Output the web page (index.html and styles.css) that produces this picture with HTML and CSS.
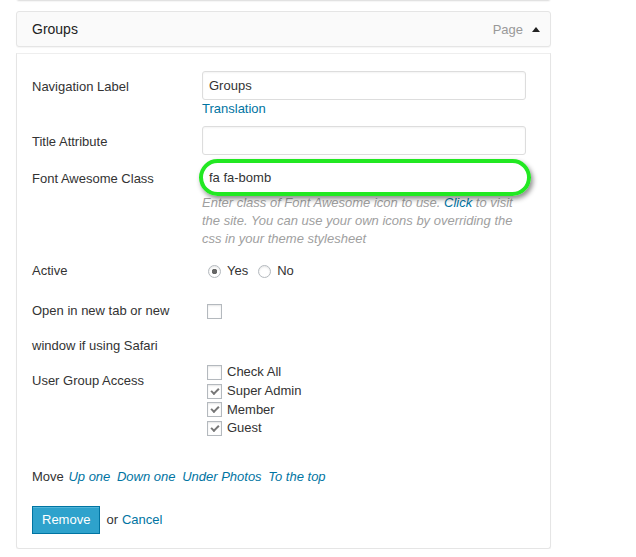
FILE: index.html
```html
<!DOCTYPE html>
<html lang="en">
<head>
  <meta charset="UTF-8">
  <meta name="viewport" content="width=device-width, initial-scale=1.0">
  <title>Menu Item - Groups</title>
  <link rel="stylesheet" href="styles.css">
</head>
<body>
  <div class="menu">
    <div class="item-prev"></div>

    <div class="item-bar">
      <span class="item-title">Groups</span>
      <span class="item-controls">
        <span class="item-type">Page</span>
        <span class="item-toggle"></span>
      </span>
    </div>

    <form class="item-settings">
      <div class="field">
        <label class="field-label" for="nav-label">Navigation Label</label>
        <div class="field-body">
          <input type="text" id="nav-label" value="Groups">
          <a href="#" class="translation">Translation</a>
        </div>
      </div>

      <div class="field">
        <label class="field-label" for="title-attr">Title Attribute</label>
        <div class="field-body">
          <input type="text" id="title-attr">
        </div>
      </div>

      <div class="field">
        <label class="field-label" for="fa-class">Font Awesome Class</label>
        <div class="field-body">
          <div class="fa-input">
            <input type="text" id="fa-class" value="fa fa-bomb">
            <span class="ring"></span>
          </div>
          <p class="help">Enter class of Font Awesome icon to use. <a href="#">Click</a> to visit the site. You can use your own icons by overriding the css in your theme stylesheet</p>
        </div>
      </div>

      <div class="field field-active">
        <span class="field-label">Active</span>
        <div class="field-body">
          <label class="radio"><input type="radio" name="active" checked> Yes</label>
          <label class="radio"><input type="radio" name="active"> No</label>
        </div>
      </div>

      <div class="field field-newtab">
        <label class="field-label" for="new-tab">Open in new tab or new window if using Safari</label>
        <div class="field-body">
          <input type="checkbox" id="new-tab">
        </div>
      </div>

      <div class="field field-access">
        <span class="field-label">User Group Access</span>
        <div class="field-body">
          <label class="check"><input type="checkbox"> Check All</label>
          <label class="check"><input type="checkbox" checked> Super Admin</label>
          <label class="check"><input type="checkbox" checked> Member</label>
          <label class="check"><input type="checkbox" checked> Guest</label>
        </div>
      </div>

      <div class="move">
        Move
        <a href="#">Up one</a>
        <a href="#">Down one</a>
        <a href="#">Under Photos</a>
        <a href="#">To the top</a>
      </div>

      <div class="actions">
        <button type="button" class="button-primary">Remove</button>
        <span class="or">or</span>
        <a href="#" class="cancel">Cancel</a>
      </div>
    </form>
  </div>
</body>
</html>
```

FILE: styles.css
```css
body {
  margin: 0;
  font-family: "Liberation Sans", Arial, sans-serif;
  font-size: 13px;
  color: #333;
  background-color: #fff;
}
a {
  color: #0074a2;
  text-decoration: none;
}
.menu {
  width: 535px;
  margin-left: 16px;
}
.item-prev {
  height: 9px;
  margin-top: -10px;
  border: 1px solid #e2e2e2;
  border-radius: 0 0 3px 3px;
  box-shadow: 0 1px 1px rgba(0, 0, 0, 0.04);
}
.item-bar {
  height: 36px;
  box-sizing: border-box;
  margin-top: 10px;
  padding: 0 10px 0 15px;
  display: flex;
  align-items: center;
  justify-content: space-between;
  background-color: #fafafa;
  border: 1px solid #e5e5e5;
  border-radius: 3px;
  box-shadow: 0 1px 1px rgba(0, 0, 0, 0.04);
}
.item-title {
  font-size: 14px;
  color: #222;
}
.item-controls {
  display: flex;
  align-items: center;
  gap: 9px;
}
.item-type {
  color: #999;
}
.item-toggle {
  width: 0;
  height: 0;
  border-left: 4px solid transparent;
  border-right: 4px solid transparent;
  border-bottom: 5px solid #222;
}
.item-settings {
  margin: 6px 0 0;
  padding: 17px 24px 14px 15px;
  border: 1px solid #e5e5e5;
  border-top-color: #eee;
  border-radius: 0 0 3px 3px;
  box-shadow: 0 1px 1px rgba(0, 0, 0, 0.04);
}
.field {
  display: grid;
  grid-template-columns: 170px 1fr;
  margin-bottom: 8px;
}
.field-label {
  padding-top: 7px;
  line-height: 18px;
}
input[type="text"] {
  display: block;
  width: 100%;
  height: 29px;
  box-sizing: border-box;
  margin: 0;
  padding: 0 6px;
  font-family: inherit;
  font-size: 13px;
  color: #333;
  border: 1px solid #ddd;
  border-radius: 3px;
  box-shadow: inset 0 1px 2px rgba(0, 0, 0, 0.05);
  outline: none;
}
.translation {
  display: block;
  line-height: 18px;
}
.fa-input {
  position: relative;
}
.fa-input input[type="text"] {
  border-color: transparent;
  box-shadow: none;
  background: transparent;
}
/* green marker drawn round the icon class input */
.ring {
  position: absolute;
  left: -3px;
  right: -5px;
  top: -4px;
  bottom: -4px;
  border: 4px solid #22e822;
  border-radius: 19px;
  box-shadow: 2px 3px 5px rgba(0, 0, 0, 0.45);
  pointer-events: none;
}
.help {
  margin: 2px 0 0;
  line-height: 18px;
  font-style: italic;
  color: #a0a0a0;
}
.field-active {
  margin-top: 14px;
  margin-bottom: 13px;
}
.field-active .field-body {
  height: 18px;
  display: flex;
  align-items: center;
}
.field-active .field-label,
.field-access .field-label {
  padding-top: 0;
}
.radio {
  display: inline-flex;
  align-items: center;
  gap: 6px;
  line-height: 18px;
}
.radio + .radio {
  margin-left: 4px;
}
.radio input {
  appearance: none;
  width: 13px;
  height: 13px;
  margin: 0 0 0 6px;
  border: 1px solid #b4b9be;
  border-radius: 50%;
  background: #fff;
  box-shadow: inset 0 1px 2px rgba(0, 0, 0, 0.1);
}
.radio input:checked {
  background: radial-gradient(circle, #666 0, #666 2.5px, #fff 3px);
}
input[type="checkbox"] {
  appearance: none;
  position: relative;
  width: 15px;
  height: 15px;
  margin: 0 0 0 5px;
  border: 1px solid #b4b9be;
  background: #fff;
  box-shadow: inset 0 1px 2px rgba(0, 0, 0, 0.1);
}
input[type="checkbox"]:checked::before {
  content: "";
  position: absolute;
  left: 3px;
  top: 3px;
  width: 6px;
  height: 3px;
  border-left: 2px solid #777;
  border-bottom: 2px solid #777;
  transform: rotate(-45deg);
}
.field-newtab {
  margin-bottom: 0;
}
.field-newtab .field-label {
  padding: 0 20px 0 0;
  line-height: 35px;
}
.field-newtab input[type="checkbox"] {
  margin-top: 11px;
}
.field-access .field-label {
  padding-top: 9px;
}
.check {
  display: flex;
  align-items: center;
  gap: 5px;
  height: 18.7px;
  line-height: 18px;
}
.move {
  margin-top: 30px;
  line-height: 18px;
}
.move a {
  font-style: italic;
  margin-left: 3px;
}
.move a:first-child {
  margin-left: 1px;
}
.actions {
  margin-top: 20px;
  display: flex;
  align-items: center;
}
.button-primary {
  height: 28px;
  padding: 0 9px;
  font-family: inherit;
  font-size: 13px;
  color: #fff;
  background-color: #2ea2cc;
  border: 1px solid #0074a2;
  border-radius: 0;
  box-shadow: inset 0 1px 0 rgba(120, 200, 230, 0.5);
  cursor: pointer;
}
.or {
  margin: 0 4px 0 6px;
}
```
